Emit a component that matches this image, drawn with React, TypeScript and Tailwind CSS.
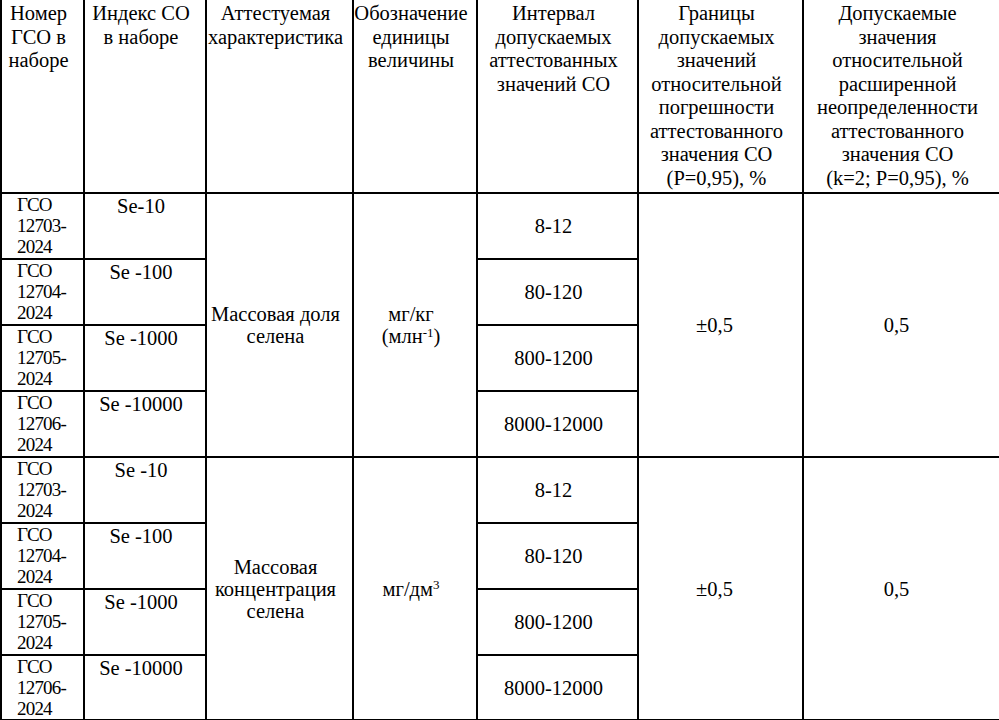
import React from "react";

type Block = {
  items: { gso: string; index: string; range: string }[];
  characteristic: React.ReactNode;
  unit: React.ReactNode;
};

const blocks: Block[] = [
  {
    characteristic: (
      <>
        Массовая доля
        <br />
        селена
      </>
    ),
    unit: (
      <>
        мг/кг
        <br />
        (млн<sup className="text-[13px]">-1</sup>)
      </>
    ),
    items: [
      { gso: "12703-", index: "Se-10", range: "8-12" },
      { gso: "12704-", index: "Se -100", range: "80-120" },
      { gso: "12705-", index: "Se -1000", range: "800-1200" },
      { gso: "12706-", index: "Se -10000", range: "8000-12000" },
    ],
  },
  {
    characteristic: (
      <>
        Массовая
        <br />
        концентрация
        <br />
        селена
      </>
    ),
    unit: (
      <>
        мг/дм<sup className="text-[13px]">3</sup>
      </>
    ),
    items: [
      { gso: "12703-", index: "Se -10", range: "8-12" },
      { gso: "12704-", index: "Se -100", range: "80-120" },
      { gso: "12705-", index: "Se -1000", range: "800-1200" },
      { gso: "12706-", index: "Se -10000", range: "8000-12000" },
    ],
  },
];

const cell = "border-2 border-black pl-0 pr-[8px] text-center font-normal whitespace-nowrap";
const head = `${cell} border-t-0 pt-[2px] align-top leading-[23.5px]`;

export default function App() {
  return (
    <div className="h-[720px] w-[999px] overflow-hidden bg-white font-['Liberation_Serif'] text-black">
      <table className="w-[999px] table-fixed border-collapse font-['Liberation_Serif'] text-[20.5px] leading-[22px]">
        <colgroup>
          <col className="w-[83px]" />
          <col className="w-[122px]" />
          <col className="w-[147px]" />
          <col className="w-[124px]" />
          <col className="w-[161px]" />
          <col className="w-[165px]" />
          <col className="w-[197px]" />
        </colgroup>
        <thead>
          <tr className="h-[193px]">
            <th className={head}>
              Номер
              <br />
              ГСО в
              <br />
              наборе
            </th>
            <th className={head}>
              Индекс СО
              <br />в наборе
            </th>
            <th className={`${head} pr-[2px]`}>
              Аттестуемая
              <br />
              характеристика
            </th>
            <th className={head}>
              Обозначение
              <br />
              единицы
              <br />
              величины
            </th>
            <th className={head}>
              Интервал
              <br />
              допускаемых
              <br />
              аттестованных
              <br />
              значений СО
            </th>
            <th className={head}>
              Границы
              <br />
              допускаемых
              <br />
              значений
              <br />
              относительной
              <br />
              погрешности
              <br />
              аттестованного
              <br />
              значения СО
              <br />
              (P=0,95), %
            </th>
            <th className={head}>
              Допускаемые
              <br />
              значения
              <br />
              относительной
              <br />
              расширенной
              <br />
              неопределенности
              <br />
              аттестованного
              <br />
              значения СО
              <br />
              (k=2; P=0,95), %
            </th>
          </tr>
        </thead>
        <tbody>
          {blocks.map((b, bi) =>
            b.items.map((it, i) => (
              <tr
                key={`${bi}-${i}`}
                className={bi === 1 && i === 3 ? "h-[64px]" : "h-[66px]"}
              >
                <td className={`${cell} pl-[15px] pr-0 text-left align-top text-[19px] leading-[21px] tracking-[-0.8px]`}>
                  ГСО
                  <br />
                  {it.gso}
                  <br />
                  2024
                </td>
                <td className={`${cell} align-top pt-[1px]`}>{it.index}</td>
                {i === 0 && (
                  <>
                    <td rowSpan={4} className={`${cell} pr-[2px] align-middle`}>
                      {b.characteristic}
                    </td>
                    <td rowSpan={4} className={`${cell} align-middle`}>
                      {b.unit}
                    </td>
                  </>
                )}
                <td className={`${cell} align-middle`}>{it.range}</td>
                {i === 0 && (
                  <>
                    <td rowSpan={4} className={`${cell} pr-[12px] align-middle`}>
                      ±0,5
                    </td>
                    <td rowSpan={4} className={`${cell} pr-[10px] align-middle`}>
                      0,5
                    </td>
                  </>
                )}
              </tr>
            ))
          )}
        </tbody>
      </table>
    </div>
  );
}
